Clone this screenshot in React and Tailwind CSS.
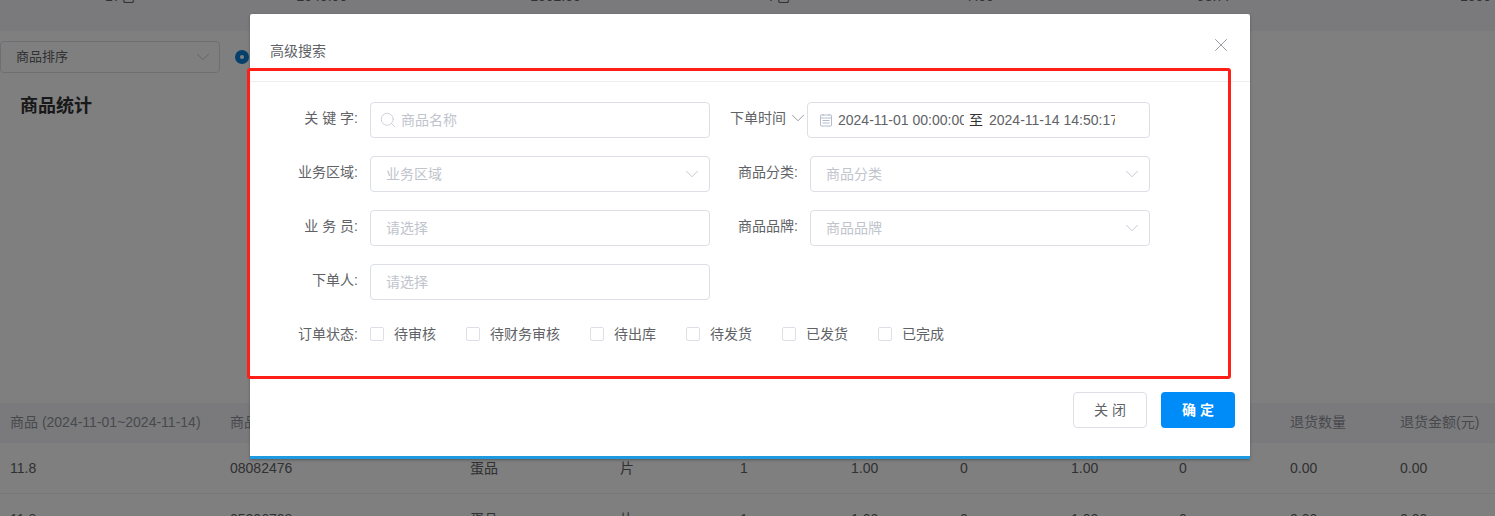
import React from 'react';
import { ChevronDown, Search, X } from 'lucide-react';

const fontStack = { fontFamily: '"Liberation Sans", "Noto Sans CJK SC", sans-serif' };

const colWidths = ['w-[220px]', 'w-[240px]', 'w-[150px]', 'w-[120px]', 'w-[111px]', 'w-[109px]', 'w-[111px]', 'w-[108px]', 'w-[111px]', 'w-[110px]', 'w-[95px]'];
const headers = ['商品 (2024-11-01~2024-11-14)', '商品编码', '商品分类', '单位', '销售数量', '销售金额(元)', '赠品数量', '实际金额', '退货单数', '退货数量', '退货金额(元)'];
const rows = [
  ['11.8', '08082476', '蛋品', '片', '1', '1.00', '0', '1.00', '0', '0.00', '0.00'],
  ['11.8', '05206708', '蛋品', '片', '1', '1.00', '0', '1.00', '0', '0.00', '0.00'],
];

function Field({ label, children }) {
  return (
    <>
      <span className="w-[108px] shrink-0 pb-[4px] text-right whitespace-pre text-[#606266]">{label}</span>
      <div className="ml-[12px]">{children}</div>
    </>
  );
}

function SelectBox({ text }) {
  return (
    <div className="flex h-[36px] w-[340px] items-center justify-between rounded-[4px] border border-[#dcdfe6] pr-[6px] pl-[15px] text-[#c0c4cc]">
      <span>{text}</span>
      <ChevronDown size={22} strokeWidth={1} className="text-[#c0c4cc]" />
    </div>
  );
}

function Check({ label }) {
  return (
    <label className="flex items-center gap-[10px] text-[#606266]">
      <span className="h-[14px] w-[14px] rounded-[2px] border border-[#dcdfe6] bg-white" />
      {label}
    </label>
  );
}

function CalendarIcon() {
  return (
    <svg width="14" height="14" viewBox="0 0 14 14" fill="none" stroke="#b4bccc" strokeWidth="1">
      <rect x="1.5" y="2" width="11" height="11" rx="0.5" />
      <path d="M1.5 5h11M3.5 7.5h7M3.5 10h7M4 .8v2M10 .8v2" />
    </svg>
  );
}

export default function App() {
  return (
    <div className="relative h-[516px] w-[1495px] overflow-hidden bg-white text-[14px]" style={fontStack}>
      {/* page behind the dialog */}
      <div className="h-[31px] overflow-hidden bg-[#f4f5fa] text-[#606266]">
        <div className="-mt-[12px] flex h-[16px] items-center leading-[16px]">
          <span className="ml-[105px]">17包</span>
          <span className="ml-[162px]">2049.00</span>
          <span className="ml-[183px]">1002.00</span>
          <span className="ml-[187px]">7包</span>
          <span className="ml-[177px]">7.00</span>
          <span className="ml-[203px]">98.77</span>
          <span className="ml-[228px]">1000</span>
        </div>
      </div>

      <div className="mt-[10px] flex items-center">
        <div className="flex h-[32px] w-[220px] items-center justify-between rounded-[4px] border border-[#dcdfe6] pr-[5px] pl-[15px] text-[13px] text-[#606266]">
          商品排序
          <ChevronDown size={22} strokeWidth={1} className="text-[#c0c4cc]" />
        </div>
        <span className="ml-[15px] flex h-[14px] w-[14px] items-center justify-center rounded-full bg-[#0a7fd8]">
          <span className="h-[4px] w-[4px] rounded-full bg-white" />
        </span>
      </div>

      <h2 className="mt-[21px] ml-[20px] text-[18px] leading-[24px] font-bold text-[#303133]">商品统计</h2>

      <div className="mt-[285px]">
        <div className="flex h-[40px] items-center bg-[#f4f5fa] pb-[1px] text-[#909399]">
          {headers.map((h, i) => (
            <div key={h} className={`${colWidths[i]} shrink-0 pl-[10px] whitespace-nowrap`}>{h}</div>
          ))}
        </div>
        {rows.map((row, r) => (
          <div key={r} className="flex h-[51px] items-center border-b border-[#ebeef5] text-[#606266]">
            {row.map((cell, i) => (
              <div key={i} className={`${colWidths[i]} shrink-0 pl-[10px]`}>{cell}</div>
            ))}
          </div>
        ))}
      </div>

      {/* overlay */}
      <div className="absolute inset-0 bg-black/50" />

      {/* dialog */}
      <div className="absolute top-[14px] left-[250px] h-[445px] w-[1000px] rounded-t-[2px] border-b-[3px] border-[#1e9be0] bg-white shadow-[0_1px_3px_rgba(0,0,0,0.3)]">
        <div className="flex h-[68px] items-start justify-between border-b border-[#eeeeee] pt-[28px] pr-[18px] pl-[20px]">
          <span className="leading-[19px] text-[#606266]">高级搜索</span>
          <X size={22} strokeWidth={1} className="-mt-[8px] text-[#909399]" />
        </div>

        <div className="flex flex-col gap-[18px] pt-[20px]">
          <div className="flex items-center">
            <Field label="关 键 字:">
              <div className="flex h-[36px] w-[340px] items-center gap-[4px] rounded-[4px] border border-[#dcdfe6] pl-[8px] text-[#c0c4cc]">
                <Search size={18} strokeWidth={1} />
                商品名称
              </div>
            </Field>
            <span className="ml-[20px] pb-[4px] text-[#606266]">下单时间</span>
            <ChevronDown size={22} strokeWidth={1} className="mb-[4px] ml-[1px] text-[#909399]" />
            <div className="-ml-[2px] flex h-[36px] w-[343px] items-center rounded-[4px] border border-[#dcdfe6] pl-[11px] text-[#606266]">
              <CalendarIcon />
              <span className="ml-[5px] w-[126px] overflow-hidden whitespace-nowrap">2024-11-01 00:00:00</span>
              <span className="mx-[5px] text-[#303133]">至</span>
              <span className="ml-[1px] w-[126px] overflow-hidden whitespace-nowrap">2024-11-14 14:50:17</span>
            </div>
          </div>

          <div className="flex items-center">
            <Field label="业务区域:"><SelectBox text="业务区域" /></Field>
            <span className="w-[88px] pb-[4px] text-right text-[#606266]">商品分类:</span>
            <div className="ml-[12px]"><SelectBox text="商品分类" /></div>
          </div>

          <div className="flex items-center">
            <Field label="业 务 员:">
              <div className="flex h-[36px] w-[340px] items-center rounded-[4px] border border-[#dcdfe6] pl-[15px] text-[#c0c4cc]">请选择</div>
            </Field>
            <span className="w-[88px] pb-[4px] text-right text-[#606266]">商品品牌:</span>
            <div className="ml-[12px]"><SelectBox text="商品品牌" /></div>
          </div>

          <div className="flex items-center">
            <Field label="下单人:">
              <div className="flex h-[36px] w-[340px] items-center rounded-[4px] border border-[#dcdfe6] pl-[15px] text-[#c0c4cc]">请选择</div>
            </Field>
          </div>

          <div className="flex h-[32px] items-center">
            <span className="w-[108px] shrink-0 text-right text-[#606266]">订单状态:</span>
            <div className="ml-[12px] flex items-center gap-[30px]">
              <Check label="待审核" />
              <Check label="待财务审核" />
              <Check label="待出库" />
              <Check label="待发货" />
              <Check label="已发货" />
              <Check label="已完成" />
            </div>
          </div>
        </div>

        <div className="mt-[42px] flex justify-end gap-[14px] pr-[15px]">
          <button className="h-[36px] w-[74px] rounded-[4px] border border-[#dcdfe6] bg-white text-[#606266]">关 闭</button>
          <button className="h-[36px] w-[74px] rounded-[4px] bg-[#008cf8] font-bold text-white">确 定</button>
        </div>
      </div>

      {/* red annotation frame */}
      <div className="absolute top-[68px] left-[247px] h-[311px] w-[984px] rounded-[3px] border-[3px] border-[#ff1f17]" />
    </div>
  );
}
